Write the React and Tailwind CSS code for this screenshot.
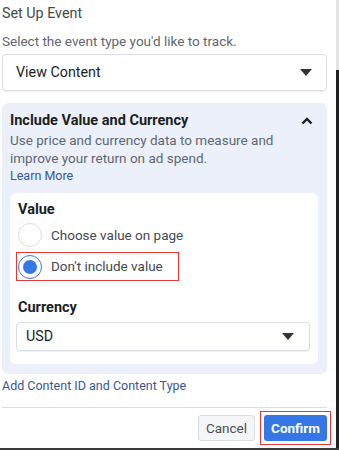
import React from "react";

function Caret() {
  return (
    <svg width="12" height="7" viewBox="0 0 12 7" className="shrink-0">
      <path d="M0 0 L12 0 L6 7 Z" fill="#333" />
    </svg>
  );
}

export default function App() {
  return (
    <div
      className="w-[339px] h-[450px] bg-[#2a2a2a] flex flex-col overflow-hidden"
      style={{ fontFamily: "Roboto, 'Liberation Sans', sans-serif" }}
    >
      <div className="flex flex-1 min-h-0">
        <div className="w-[336px] bg-white flex flex-col">
          <div className="pl-[2px] pr-[9px] flex flex-col">
            <div className="text-[14.3px] leading-[18px] text-[#444950] mt-[4px]">Set Up Event</div>
            <div className="text-[13.5px] leading-[16px] text-[#606770] mt-[11px]">
              Select the event type you'd like to track.
            </div>
            <div className="mt-[5px] h-[37px] border border-[#dadde1] rounded-[4px] flex items-center justify-between pl-[13px] pr-[14px] shadow-[0_1px_1px_rgba(0,0,0,0.06)]">
              <span className="text-[14.3px] text-[#1c1e21]">View Content</span>
              <Caret />
            </div>

            <div className="mt-[12px] bg-[#ebf0fb] rounded-[6px] pt-[9px] pl-[8px] pr-[9px] pb-[10px] flex flex-col">
              <div className="flex items-center justify-between">
                <span className="text-[14.5px] leading-[18px] font-bold text-[#1c1e21]">
                  Include Value and Currency
                </span>
                <svg width="12" height="8" viewBox="0 0 12 8" className="mr-[5px]">
                  <path d="M1.5 6.5 L6 2 L10.5 6.5" stroke="#1c1e21" strokeWidth="2.4" fill="none" />
                </svg>
              </div>
              <div className="text-[13.5px] leading-[18px] text-[#606770] mt-[1px]">
                Use price and currency data to measure and
                <br />
                improve your return on ad spend.
              </div>
              <div className="text-[12.5px] leading-[17px] text-[#385898]">Learn More</div>

              <div className="mt-[9px] bg-white rounded-[6px] pt-[8px] pl-[6px] pr-[8px] pb-[13px] flex flex-col">
                <div className="text-[14.5px] leading-[18px] font-bold text-[#1c1e21] pl-[2px]">Value</div>
                <div className="flex items-center gap-[9px] h-[26px] mt-[3px] pl-[2px]">
                  <div className="w-[24px] h-[24px] rounded-full border border-[#dadde1] bg-white" />
                  <span className="text-[13.5px] text-[#444950]">Choose value on page</span>
                </div>
                <div className="mt-[4px] w-[163px] h-[29px] border border-[#e53935] flex items-center gap-[9px] pl-[1px]">
                  <div className="w-[24px] h-[24px] rounded-full border border-[#3578e5] bg-white flex items-center justify-center">
                    <div className="w-[14px] h-[14px] rounded-full bg-[#3578e5]" />
                  </div>
                  <span className="text-[13.5px] text-[#444950]">Don't include value</span>
                </div>
                <div className="text-[14.5px] leading-[18px] font-bold text-[#1c1e21] mt-[18px] pl-[2px]">
                  Currency
                </div>
                <div className="mt-[5px] h-[29px] border border-[#dadde1] rounded-[4px] flex items-center justify-between pl-[9px] pr-[15px] shadow-[0_1px_1px_rgba(0,0,0,0.06)]">
                  <span className="text-[14.3px] text-[#1c1e21]">USD</span>
                  <Caret />
                </div>
              </div>
            </div>

            <div className="text-[12.5px] leading-[16px] text-[#385898] mt-[4px]">
              Add Content ID and Content Type
            </div>
            <div className="h-px bg-[#dadde1] mt-[13px]" />
            <div className="flex justify-end items-center mt-[3px] gap-[5px]">
              <div className="h-[26px] w-[57px] rounded-[3px] border border-[#dadde1] bg-[#f5f6f7] flex items-center justify-center text-[13.5px] text-[#4b4f56]">
                Cancel
              </div>
              <div className="border border-[#e53935] p-[3px] -mr-[4px]">
                <div className="h-[26px] w-[63px] rounded-[3px] bg-[#3578e5] flex items-center justify-center text-[13.5px] font-bold text-white">
                  Confirm
                </div>
              </div>
            </div>
          </div>
        </div>
        <div className="w-[3px] flex flex-col">
          <div className="h-[70px] bg-[#e4e4e4]" />
          <div className="flex-1 bg-[#1e2224]" />
        </div>
      </div>
      <div className="h-[2px] bg-[#3a3a3a] shrink-0" />
    </div>
  );
}
